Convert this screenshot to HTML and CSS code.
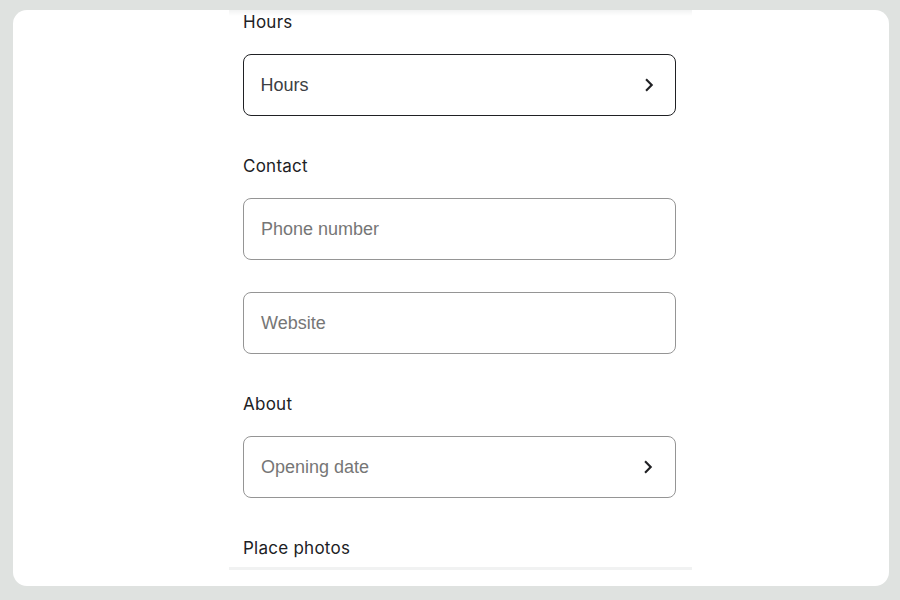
FILE: index.html
```html
<!DOCTYPE html>
<html lang="en">
<head>
<meta charset="utf-8">
<title>Edit place</title>
<link rel="stylesheet" href="styles.css">
</head>
<body>
<div class="card">
  <div class="panel">
    <section class="section">
      <h2 class="heading">Hours</h2>
      <div class="field field-active">
        <span class="value">Hours</span>
        <svg class="chev" viewBox="0 0 24 24" width="24" height="24"><path d="M8.3 16.9L13.2 12 8.3 7.1 9.8 5.6l6.4 6.4-6.4 6.4z"/></svg>
      </div>
    </section>
    <section class="section">
      <h2 class="heading">Contact</h2>
      <div class="fields">
        <div class="field"><span class="placeholder">Phone number</span></div>
        <div class="field"><span class="placeholder">Website</span></div>
      </div>
    </section>
    <section class="section">
      <h2 class="heading">About</h2>
      <div class="field">
        <span class="placeholder">Opening date</span>
        <svg class="chev" viewBox="0 0 24 24" width="24" height="24"><path d="M8.3 16.9L13.2 12 8.3 7.1 9.8 5.6l6.4 6.4-6.4 6.4z"/></svg>
      </div>
    </section>
    <section class="section">
      <h2 class="heading">Place photos</h2>
    </section>
  </div>
</div>
</body>
</html>
```
FILE: styles.css
```css
html, body {
  margin: 0;
  padding: 0;
  background: #dfe2e0;
  height: 600px;
  overflow: hidden;
}
.card {
  margin: 10px 11px 0 13px;
  height: 576px;
  background: #ffffff;
  border-radius: 14px;
  display: flex;
  align-items: flex-start;
}
.panel {
  margin-left: 216px;
  width: 463px;
  box-sizing: border-box;
  height: 560px;
  padding: 0 16px 0 14px;
  background: linear-gradient(#f2f3f3, #ffffff 6px);
  border-bottom: 3px solid #f1f2f2;
  display: flex;
  flex-direction: column;
  gap: 38px;
}
.section {
  display: flex;
  flex-direction: column;
  gap: 21px;
}
.heading {
  margin: 0;
  padding-top: 1px;
  font-family: "Inter", "Open Sans", sans-serif;
  font-weight: 400;
  font-size: 17px;
  letter-spacing: 0.25px;
  line-height: 22px;
  color: #202124;
}
.fields {
  display: flex;
  flex-direction: column;
  gap: 32px;
}
.field {
  height: 62px;
  box-sizing: border-box;
  border: 1px solid #959595;
  border-radius: 8px;
  padding: 0 15px 0 17px;
  display: flex;
  align-items: center;
  justify-content: space-between;
  font-family: "Liberation Sans", Arial, sans-serif;
  font-size: 18px;
}
.field-active {
  border: 1.5px solid #202124;
  padding-left: 16.5px;
  padding-right: 14.5px;
}
.value {
  color: #3c4043;
}
.placeholder {
  color: #767676;
}
.chev {
  fill: #202124;
  flex: none;
}
```
